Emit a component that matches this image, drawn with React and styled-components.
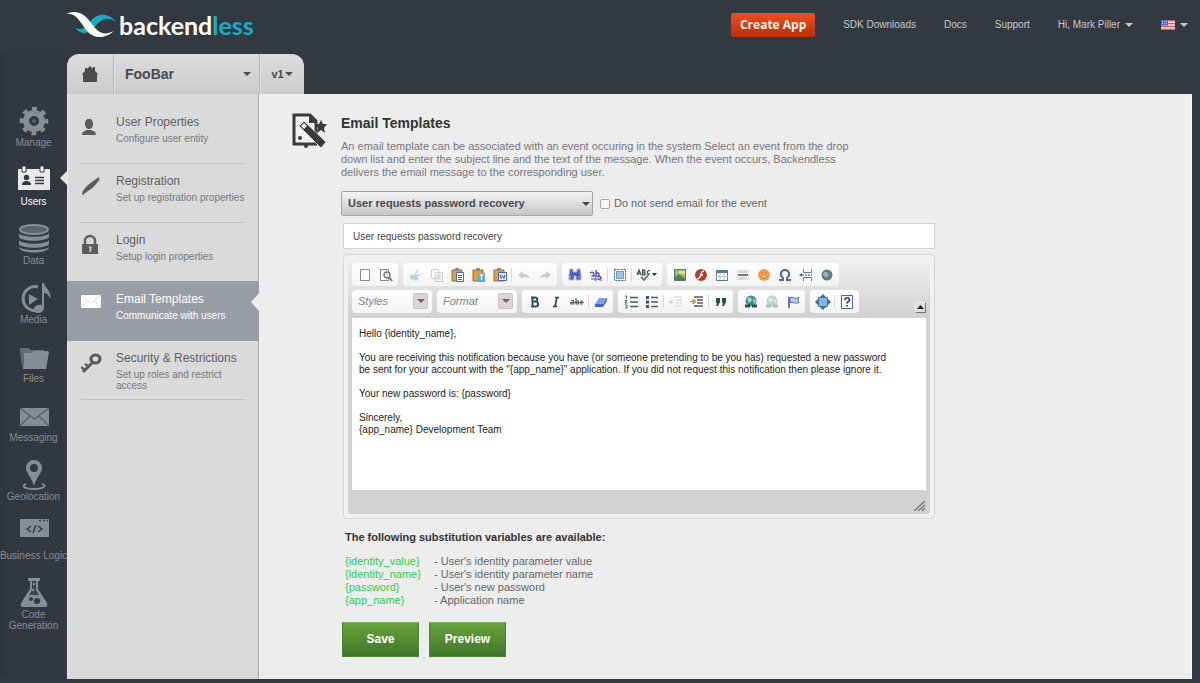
import React from "react";
import styled, { createGlobalStyle, css } from "styled-components";

const GlobalStyle = createGlobalStyle`
  *, *::before, *::after { box-sizing: border-box; }
  body {
    margin: 0;
    background: #333941;
    font-family: "Liberation Sans", Arial, sans-serif;
    color: #666;
  }
  button, input, select, textarea { font-family: inherit; margin: 0; }
  button { cursor: pointer; }
  svg { display: block; flex: none; }
  a { color: inherit; text-decoration: none; }
`;

/* ---------- page frame ---------- */

const Page = styled.div`
  min-height: 100vh;
  display: flex;
  flex-direction: column;
`;

const Header = styled.header`
  height: 54px;
  padding: 0 12px 4px 66px;
  display: flex;
  align-items: center;
  justify-content: space-between;
`;

const Logo = styled.a`
  display: flex;
  align-items: center;
  gap: 2px;
  color: #fff;
  font: 700 25px/28px Lato, "Open Sans", sans-serif;
`;

const LogoAccent = styled.span`
  color: #18adc4;
`;

const TopNav = styled.nav`
  display: flex;
  align-items: center;
  gap: 28px;
  font-size: 10px;
  line-height: 12px;
  color: #c6c9cd;
`;

const NavButton = styled.button`
  display: flex;
  align-items: center;
  gap: 5px;
  padding: 0;
  border: 0;
  background: none;
  font-size: 10px;
  line-height: 12px;
  color: inherit;
`;

const CreateButton = styled.button`
  width: 84px;
  height: 24px;
  padding: 0;
  border: 0;
  border-radius: 2px;
  background: linear-gradient(#ee4f21, #b92f07);
  color: #fff4ee;
  font: 700 12px/22px "Open Sans", sans-serif;
`;

const Caret = styled.span`
  width: 0;
  height: 0;
  border: 4px solid transparent;
  border-top-color: currentColor;
  border-bottom-width: 0;
`;

const Body = styled.div`
  flex: 1;
  display: flex;
  padding: 0 8px 4px 0;
`;

/* ---------- left rail ---------- */

const Rail = styled.nav`
  flex: none;
  width: 67px;
  padding-top: 51px;
  background: linear-gradient(90deg, #2c333c, #31383f 12px);
`;

const RailItem = styled.a`
  position: relative;
  display: flex;
  flex-direction: column;
  align-items: center;
  height: 59px;
  font-size: 10px;
  line-height: 11px;
  text-align: center;
  color: ${(p) => (p.$active ? "#fff" : "#868d97")};
  ${(p) =>
    p.$active &&
    css`
      &::after {
        content: "";
        position: absolute;
        right: 0;
        top: 7px;
        border: 7px solid transparent;
        border-right-color: #e4e4e4;
        border-left-width: 0;
      }
    `}
`;

const RailLabel = styled.span`
  white-space: pre;
`;

/* ---------- application tabs ---------- */

const Main = styled.div`
  flex: 1;
  min-width: 0;
  display: flex;
  flex-direction: column;
`;

const AppTabs = styled.div`
  display: flex;
  align-self: flex-start;
  height: 40px;
  border-radius: 12px 12px 0 0;
  overflow: hidden;
  background: linear-gradient(#dcdcde, #cacbcd);
`;

const AppTab = styled.button`
  width: ${(p) => p.$width}px;
  display: flex;
  align-items: center;
  justify-content: ${(p) => (p.$spread ? "space-between" : "center")};
  gap: 1px;
  padding: ${(p) => (p.$spread ? "0 8px 0 11px" : "0")};
  border: 0;
  background: none;
  color: #4b4b4d;
  font-size: ${(p) => (p.$spread ? 14 : 11)}px;
  font-weight: 700;
  & + & {
    border-left: 1px solid #b4b5b7;
    box-shadow: inset 1px 0 #e3e3e5;
  }
`;

const Panel = styled.div`
  flex: 1;
  display: flex;
  background: #ededed;
`;

/* ---------- section menu ---------- */

const SectionMenu = styled.nav`
  flex: none;
  width: 192px;
  padding-top: 11px;
  background: #dadada;
  border-left: 1px solid #e8e8e8;
  box-shadow: inset -1px 0 #b0b0b2, inset -2px 0 #d0d0d0;
`;

const MenuItem = styled.a`
  position: relative;
  display: grid;
  grid-template-columns: 35px 1fr;
  height: 59px;
  margin: 0 14px 0 13px;
  padding-top: 10px;
  border-bottom: 1px solid #c3c3c3;
  color: #5e5e60;
  ${(p) =>
    p.$last &&
    css`
      border-bottom-color: transparent;
    `}
  ${(p) =>
    p.$active &&
    css`
      height: 60px;
      margin: -1px 0 0 -1px;
      padding: 11px 14px 0;
      border: 0;
      background: #999ea6;
      color: #fff;
      &::after {
        content: "";
        position: absolute;
        right: 0;
        top: 12px;
        border: 9px solid transparent;
        border-right: 8px solid #ededed;
        border-left-width: 0;
      }
    `}
`;

const MenuTitle = styled.span`
  display: block;
  margin-bottom: 3px;
  font-size: 12px;
  line-height: 15px;
`;

const MenuNote = styled.span`
  display: block;
  font-size: 10px;
  line-height: 11px;
  color: ${(p) => (p.$active ? "#fff" : "#77777a")};
`;

/* ---------- content ---------- */

const Content = styled.main`
  flex: 1;
  min-width: 0;
  display: grid;
  grid-template-columns: 36px minmax(0, 594px);
  column-gap: 13px;
  align-content: start;
  padding: 19px 24px 20px 33px;
  border-right: 1px solid #f8f8f8;
`;

const Heading = styled.h1`
  margin: 1px 0 8px;
  font-size: 14px;
  line-height: 18px;
  color: #333;
`;

const Intro = styled.p`
  max-width: 530px;
  margin: 0 0 12px;
  font-size: 11px;
  line-height: 13px;
  color: #77777a;
`;

const EventRow = styled.div`
  display: flex;
  align-items: center;
  gap: 7px;
  margin-bottom: 7px;
`;

const SelectBox = styled.span`
  position: relative;
  display: block;
  width: ${(p) => p.$width}px;
`;

const EventSelect = styled.select`
  appearance: none;
  display: block;
  width: 100%;
  height: 25px;
  padding: 0 20px 2px 6px;
  border: 1px solid #a5a5a5;
  border-radius: 2px;
  background: linear-gradient(#f4f4f4, #c6c6c6);
  color: #4a4a4c;
  font-size: 11px;
  font-weight: 700;
`;

const SelectCaret = styled(Caret)`
  position: absolute;
  right: 3px;
  top: 11px;
  color: #444;
  pointer-events: none;
`;

const CheckLabel = styled.label`
  display: flex;
  align-items: center;
  gap: 4px;
  font-size: 11px;
  line-height: 13px;
`;

const Check = styled.input`
  appearance: none;
  width: 10px;
  height: 10px;
  border: 1px solid #a9a9a9;
  border-radius: 2px;
  background: #f6f6f6;
  &:checked {
    background: #666;
  }
`;

const Fields = styled.div`
  display: flex;
  flex-direction: column;
  gap: 5px;
  padding-left: 2px;
`;

const Subject = styled.input`
  width: 100%;
  height: 26px;
  padding: 0 9px;
  border: 1px solid #d3d3d3;
  background: #fff;
  color: #444;
  font-size: 10px;
`;

/* ---------- editor ---------- */

const Editor = styled.div`
  padding: 4px;
  border: 1px solid #d6d6d6;
  border-radius: 4px;
  background: #f1f1f1;
`;

const EditorSkin = styled.div`
  padding: 4px 4px 0;
  border-radius: 3px;
  background: linear-gradient(#f0f0f0, #d2d2d2 56px);
`;

const ToolRow = styled.div`
  display: flex;
  gap: 5px;
  height: 23px;
  margin-bottom: 4px;
`;

const ToolGroup = styled.div`
  display: flex;
  align-items: center;
  padding: 0 2px;
  border-radius: 4px;
  background: linear-gradient(#fff, #f3f3f3);
`;

const Tool = styled.button`
  display: flex;
  align-items: center;
  justify-content: center;
  width: ${(p) => (p.$wide ? 27 : 21)}px;
  height: 23px;
  padding: 0;
  border: 0;
  background: none;
  opacity: ${(p) => (p.$dim ? 0.35 : 1)};
`;

const Divider = styled.span`
  width: 1px;
  height: 13px;
  margin: 0 1px;
  background: #d8d8d8;
`;

const StyleSelect = styled.select`
  appearance: none;
  display: block;
  width: 100%;
  height: 23px;
  padding: 0 22px 2px 6px;
  border: 0;
  border-radius: 4px;
  background: linear-gradient(#fff, #f3f3f3);
  color: #848484;
  font-size: 11px;
  font-style: italic;
`;

const StyleArrow = styled.span`
  position: absolute;
  right: 4px;
  top: 3px;
  width: 15px;
  height: 16px;
  display: flex;
  align-items: center;
  justify-content: center;
  border: 1px solid #c9c4c4;
  border-radius: 2px;
  background: #dbd5d5;
  color: #6c6464;
  pointer-events: none;
`;

const Collapse = styled.button`
  align-self: flex-end;
  display: flex;
  align-items: center;
  justify-content: center;
  width: 11px;
  height: 11px;
  margin-left: auto;
  padding: 0;
  border: 1px solid;
  border-color: #eee #777 #777 #eee;
  background: #ddd;
`;

const Message = styled.textarea`
  display: block;
  width: 100%;
  height: 172px;
  margin-top: 5px;
  padding: 10px 7px;
  border: 0;
  resize: none;
  background: #fff;
  color: #222;
  font-size: 10px;
  line-height: 12px;
`;

const EditorFoot = styled.div`
  display: flex;
  align-items: center;
  justify-content: flex-end;
  height: 24px;
  padding-top: 8px;
`;

/* ---------- variables and actions ---------- */

const VarsTitle = styled.h2`
  margin: 11px 0 10px 4px;
  font-size: 11px;
  line-height: 15px;
  color: #333;
`;

const VarsTable = styled.table`
  margin-left: 4px;
  border-collapse: collapse;
  font-size: 11px;
  line-height: 13px;
  th, td { padding: 0; text-align: left; }
  th { width: 89px; font-weight: 400; color: #2ecc52; }
`;

const Actions = styled.div`
  display: flex;
  gap: 10px;
  margin: 15px 0 0 1px;
`;

const ActionButton = styled.button`
  width: 77px;
  height: 35px;
  padding: 0 0 2px;
  border: 1px solid #4c8430;
  border-top-color: #82b45f;
  background: linear-gradient(#68a33c, #41752a);
  color: #fff;
  font-size: 12px;
  font-weight: 700;
`;

/* ---------- drawings ---------- */

const LogoMark = () => (
  <svg width="51" height="28" viewBox="0 0 51 28" aria-hidden="true">
    <path d="M9 17C16 20 20 16 24 11C31 2 42 1 50 11C43 6 37 7 31 13C26 20 18 27 9 17Z" fill="#18adc4" />
    <path d="M0 3C8-1 16 1 22 8L29 17C34 23 40 24 48 20C39 28 28 28 21 20L13 9C9 4 5 2 0 3Z" fill="#fff" />
  </svg>
);

const Flag = () => (
  <svg width="14" height="10" viewBox="0 0 14 10" role="img" aria-label="English (US)">
    <path d="M0 0h14v10H0z" fill="#f4e6e6" />
    <path d="M0 .7h14M0 3.6h14M0 6.5h14M0 9.3h14" stroke="#dd5a5a" strokeWidth="1.3" />
    <path d="M0 0h7v5.5H0z" fill="#4a6fd0" />
    <path d="M1 1.5h5M1 3.5h5" stroke="#c5d3f5" strokeWidth=".8" strokeDasharray="1 1" />
  </svg>
);

const railArt = {
  Manage: (
    <>
      <circle cx="17" cy="16" r="8" fill="none" stroke="currentColor" strokeWidth="6" />
      <circle cx="17" cy="16" r="12.3" fill="none" stroke="currentColor" strokeWidth="4" strokeDasharray="4.8 4.86" strokeDashoffset="2.4" />
      <circle cx="17" cy="16" r="2" fill="currentColor" opacity=".5" />
    </>
  ),
  Users: (
    <>
      <path d="M2 5h30a1 1 0 0 1 1 1v20H1V6a1 1 0 0 1 1-1Z" fill="#e9e9ea" />
      <path d="M5 2h4v6H5zM23 2h4v6h-4z" fill="#f5f5f5" stroke="#333941" />
      <circle cx="9.5" cy="13.5" r="2.7" fill="#333941" />
      <path d="M5 21c0-3 2-4 4.500-4s4.500 1 4.500 4z" fill="#333941" />
      <path d="M18 13.500h9M18 16.500h9M18 19.500h9" stroke="#333941" strokeWidth="1.400" />
    </>
  ),
  Data: (
    <>
      <ellipse cx="17" cy="6.500" rx="14" ry="4.500" fill="#5d646e" stroke="currentColor" strokeWidth="2" />
      <path d="M2 10c3 5 27 5 30 0v4c-3 5-27 5-30 0zM2 17c3 5 27 5 30 0v4c-3 5-27 5-30 0zM2 24c3 4 27 4 30 0v1c-3 6-27 6-30 0z" fill="currentColor" />
    </>
  ),
  Media: (
    <>
      <path d="M21 5A12 12 0 1 0 22 28" fill="none" stroke="currentColor" strokeWidth="3" />
      <path d="M12 12l9 5-9 6z" fill="currentColor" />
      <path d="M25 1h2c1 5 8 8 6 16-1-4-3-6-6-6v14c0 4-3 6-6 6s-5-2-4-5c1-3 5-4 8-3z" fill="currentColor" />
    </>
  ),
  Files: (
    <>
      <path d="M3 7h9l2 2h13v4H7L5 27 3 9z" fill="#656c76" />
      <path d="M7 12h8l2-2h14l1 1-3 17H6z" fill="currentColor" />
    </>
  ),
  Messaging: (
    <>
      <path d="M3 8h29v18H3z" fill="currentColor" />
      <path d="M3 8l14.500 11L32 8M3 26l10-10M32 26L22 16" fill="none" stroke="#555c66" strokeWidth="1.300" />
    </>
  ),
  Geolocation: (
    <>
      <path d="M9 25c-4 1-4 5 8 5s12-4 8-5" fill="none" stroke="currentColor" strokeWidth="2" />
      <path fillRule="evenodd" d="M17 1a8 8 0 0 1 8 8c0 5-5 8-8 18C14 17 9 14 9 9a8 8 0 0 1 8-8zm0 4a4 4 0 1 0 0 8 4 4 0 0 0 0-8z" fill="currentColor" />
    </>
  ),
  "Business Logic": (
    <>
      <path d="M3 1h29v18H3z" fill="currentColor" />
      <path d="M22 2.500h2M26 2.500h2M29.500 2.500h1.500" stroke="#333941" strokeWidth="1.500" />
      <path d="M14 8l-4 3 4 3M21 8l4 3-4 3M19 7l-3 8" fill="none" stroke="#333941" strokeWidth="1.400" />
    </>
  ),
  "Code\nGeneration": (
    <>
      <path d="M11 1h12v3h-2v8l9 14c1 2 0 4-2 4H6c-2 0-3-2-2-4l9-14V4h-2z" fill="currentColor" />
      <path d="M15 4h4v9l3 5H12l3-5z" fill="#3d444e" />
      <path d="M16 6h2v2h-2zM15 12h2v2h-2z" fill="currentColor" />
      <circle cx="14" cy="22" r="2" fill="#333941" />
      <circle cx="20" cy="24" r="3" fill="#333941" />
    </>
  ),
};

const menuArt = {
  user: <path d="M8 4c3 0 4 2 4 5s-1.500 5-4 5-4-2-4-5 1-5 4-5zM1 20c0-4 3-4 5-5h4c2 1 5 1 5 5z" fill="#5c5c5e" />,
  pen: <path d="M1 21c0-4 3-7 6-10L15 5l3-2c1 2 0 4-2 6-3 3-5 6-9 8-2 1-3 3-6 4z" fill="#5c5c5e" />,
  lock: (
    <>
      <path d="M4 12V8a5 5 0 0 1 10 0v4" fill="none" stroke="#5c5c5e" strokeWidth="2.400" />
      <path d="M1 11h16v10H1z" fill="#5c5c5e" />
      <path d="M7.500 13.500h3V16L10 19H8.500V16z" fill="#c9c9c9" />
    </>
  ),
  mail: (
    <>
      <path d="M0 3h20v13H0z" fill="#fff" />
      <path d="M0 3l10 8 10-8M0 16l7-7M20 16l-7-7" fill="none" stroke="#dcdee1" />
    </>
  ),
  key: (
    <>
      <ellipse cx="14.500" cy="8" rx="4.500" ry="4" fill="none" stroke="#5c5c5e" strokeWidth="3.200" />
      <path d="M11 12L2 21" fill="none" stroke="#5c5c5e" strokeWidth="3" />
      <path d="M8 16l-4-3M4 19l-4-3" fill="none" stroke="#5c5c5e" strokeWidth="2.400" />
    </>
  ),
};

const TemplateIcon = () => (
  <svg width="36" height="36" viewBox="0 0 36 36" aria-hidden="true">
    <path d="M2 2h16l6 6v23H2z" fill="#f0f0f0" stroke="#3a3a3a" strokeWidth="3" />
    <path d="M17 1h1l7 7v2h-8z" fill="#3a3a3a" />
    <path d="M29 7l2 4 4 0-3 4 1 5-4-3-4 3 1-5-3-4h4z" fill="#3a3a3a" />
    <path d="M7 13l5-5 22 21-5 6z" fill="#3a3a3a" stroke="#f0f0f0" strokeWidth=".8" />
    <path d="M9 13l3-3 3 3-3 3z" fill="#fff" />
    <circle cx="8" cy="25" r="2" fill="#3a3a3a" />
    <circle cx="14" cy="33" r="2" fill="#3a3a3a" />
  </svg>
);

const clipboard = (
  <>
    <path d="M2 3h10v11H2z" fill="#dfa044" stroke="#a06d24" />
    <path d="M5 1h4v3H5z" fill="#8a8a8a" />
  </>
);
const globe = (
  <>
    <circle cx="8" cy="7" r="5.500" fill="#3f8f86" />
    <path d="M4 5l3-2 2 3-3 3zM10 4l3 3-2 3z" fill="#a8dcc8" />
    <path d="M2 12h5M9 12h5" stroke="#2c4e58" strokeWidth="3" />
  </>
);

const toolArt = {
  page: <path d="M3.500 2.500h9v11h-9z" fill="#fff" stroke="#888" />,
  preview: (
    <>
      <path d="M2.500 2.500h8v11h-8z" fill="#fff" stroke="#888" />
      <circle cx="9" cy="8" r="3" fill="#dfe8ea" stroke="#777" strokeWidth="1.400" />
      <path d="M11 10l3 4" stroke="#777" strokeWidth="2" />
    </>
  ),
  cut: <path d="M10 2L7 8M3 9h6l4-2M5 8a2 2 0 1 0 1 3zM8 9a2 2 0 1 0 2 3z" fill="#5a7fd0" stroke="#5a7fd0" strokeWidth="1.300" />,
  copy: <path d="M2.500 2.500h7v9h-7zM6.500 5.500h7v9h-7zM8 8h4M8 10h4M8 12h4" fill="#fff" stroke="#888" />,
  paste: (
    <>
      {clipboard}
      <path d="M6.500 5.500h7v9h-7z" fill="#fff" stroke="#4866ac" />
      <path d="M8 8.500h4M8 10.500h4M8 12.500h4" stroke="#4866ac" />
    </>
  ),
  pasteText: (
    <>
      {clipboard}
      <path d="M7 6h7v9H7z" fill="#62a9c8" />
      <path d="M8.500 8h4M10.500 8v5" stroke="#fff" strokeWidth="1.300" />
    </>
  ),
  pasteWord: (
    <>
      {clipboard}
      <path d="M6.500 5.500h8v8h-8z" fill="#e8eefb" stroke="#4866ac" />
      <path d="M8 7.500l1 4 1.500-3 1.500 3 1-4" fill="none" stroke="#4866ac" />
    </>
  ),
  undo: <path d="M2 8l5-4v3c4 0 6 2 7 5-2-2-4-2-7-2v2z" fill="#6d8080" />,
  redo: <path d="M14 8L9 4v3c-4 0-6 2-7 5 2-2 4-2 7-2v2z" fill="#6d8080" />,
  find: <path d="M3 2h3v3h4V2h3l1 6v5H9V9H7v4H2V8zM3.500 9v2M12 9v2" fill="#4a62b4" stroke="#a7b5e4" />,
  replace: (
    <>
      <path d="M2 6c3-2 4 0 4 3H3.500M8 3v6c4 1 4-4 0-3M10 10c4-2 4 4 0 2" fill="none" stroke="#4e56b8" strokeWidth="1.500" />
      <path d="M3 12h6l-2-2m2 2l-2 2M12 12l2 2" fill="none" stroke="#7e84c4" strokeWidth="1.300" />
    </>
  ),
  selectAll: (
    <>
      <path d="M2.500 2.500h11v11h-11z" fill="#fff" stroke="#406274" strokeDasharray="2 1" />
      <path d="M4 4h8v8H4z" fill="#6d9cc8" />
      <path d="M5 6h6M5 8h6M5 10h6" stroke="#dceaf5" />
    </>
  ),
  spell: (
    <>
      <path d="M1 8l2-5 2 5M2 6.500h2M6.500 3v5c4 0 3-2 1-2.500C10 5 9 3 6.500 3zM14 4c-3-2-4 4 0 3" fill="none" stroke="#3f5757" strokeWidth="1.300" />
      <path d="M5 10l3 3 5-6" fill="none" stroke="#4d8174" strokeWidth="1.800" />
    </>
  ),
  image: (
    <>
      <path d="M2.500 2.500h11v11h-11z" fill="#9ebc80" stroke="#56756c" />
      <path d="M7 4h6v3H7z" fill="#f5d68b" />
      <path d="M3 10l4-3 6 5v1H3z" fill="#547f46" />
    </>
  ),
  flash: (
    <>
      <circle cx="8" cy="8" r="6" fill="#b63c32" />
      <path d="M11 4C8 4 8 8 7 10s-2 2-3 2M7 8h3" fill="none" stroke="#fff" strokeWidth="1.500" />
    </>
  ),
  table: (
    <>
      <path d="M2.500 3.500h11v10h-11z" fill="#fff" stroke="#5d7890" />
      <path d="M2 3h12v3H2z" fill="#5d7890" />
      <path d="M6 6v7M10 6v7M2 9.500h12" stroke="#b3c1ce" />
    </>
  ),
  rule: (
    <>
      <path d="M2.500 3.500h11v9h-11z" fill="#f3f3f3" stroke="#ddd" />
      <path d="M3 8h10" stroke="#777" strokeWidth="2" />
      <path d="M4 5h8M4 11h8" stroke="#bbb" />
    </>
  ),
  smiley: (
    <>
      <circle cx="8" cy="8" r="6" fill="#f0a050" />
      <path d="M5 6h2M9 6h2M5 9c1 3 5 3 6 0" stroke="#c26a20" fill="#fbd3a1" />
    </>
  ),
  omega: <path d="M2 13h4v-2C2 8 4 3 8 3s6 5 2 8v2h4" fill="none" stroke="#4960b4" strokeWidth="1.900" />,
  pageBreak: (
    <>
      <path d="M5.500 2v3.500h8V2M5.500 14v-3.500h8V14" fill="none" stroke="#6d8080" />
      <path d="M4 8h10" stroke="#444" strokeDasharray="2 1" />
      <path d="M1 8l3-2v4z" fill="#4960b4" />
    </>
  ),
  iframe: (
    <>
      <circle cx="8" cy="8" r="5.500" fill="#607c88" />
      <path d="M5 5l3 0 2 3-3 3-3-3z" fill="#98b1b5" />
    </>
  ),
  bold: <path d="M4 3.500h4c3 0 3 4 0 4H6h2.500c3.500 0 3.500 5 0 5H4m1.500-9v9" fill="none" stroke="#2d5553" strokeWidth="2" />,
  italic: <path d="M7 3.500h4M5 12.500h4M9 3.500l-2 9" fill="none" stroke="#2d4d4d" strokeWidth="1.700" />,
  strike: (
    <>
      <path d="M2 6.500h2.500V10H2V8.500h2.500M7 4v6h2.500V7H7M14 7h-2v3h2" fill="none" stroke="#4f6462" strokeWidth="1.200" />
      <path d="M1 8.500h14" stroke="#4f6462" />
    </>
  ),
  eraser: (
    <>
      <path d="M6 4h8l-4 6H2z" fill="#7da0ea" />
      <path d="M2 10h8v3H2zM10 10l4-6v3l-4 6z" fill="#4a63bd" />
    </>
  ),
  ordered: (
    <>
      <path d="M7 3.500h8M7 8h8M7 12.500h8" stroke="#4b6060" strokeWidth="1.500" />
      <path d="M2 2h1.500v3M2 6.500h2L2 9h2.500M2 11h2v3H2" fill="none" stroke="#4b6060" />
    </>
  ),
  bullets: (
    <>
      <path d="M7 3.500h7M7 8h7M7 12.500h7" stroke="#4b6060" strokeWidth="1.500" />
      <path d="M2 2h3v3H2zM2 6.500h3v3H2zM2 11h3v3H2z" fill="#3c4f80" />
    </>
  ),
  outdent: <path d="M6 3h8M8 6h6M8 9h6M6 12h8M1 8l3-2v4z" fill="#888" stroke="#888" />,
  indent: (
    <>
      <path d="M5 3h9M8 6h6M8 9h6M5 12h9" stroke="#4b6060" strokeWidth="1.400" />
      <path d="M1 7.500h3M4 5l3 2.500L4 10z" fill="#d28a3c" stroke="#d28a3c" />
    </>
  ),
  quote: <path d="M3 4h4v4l-2 4H3l1-3H3zM9 4h4v4l-2 4H9l1-3H9z" fill="#2f4c4c" />,
  link: globe,
  unlink: globe,
  anchor: (
    <>
      <path d="M4 3v11" stroke="#3f51a5" strokeWidth="1.600" />
      <path d="M5 3.500c3-1 4 2 9 0-1 2-1 3 0 5-4 2-6-1-9 0z" fill="#bfcaf1" stroke="#596bc0" />
    </>
  ),
  maximize: (
    <>
      <path d="M8 0l3 3H5zM8 16l3-3H5zM0 8l3-3v6zM16 8l-3-3v6z" fill="#48648f" />
      <path d="M3.500 3.500h9v9h-9z" fill="#7fb7e4" stroke="#46709c" />
    </>
  ),
  about: (
    <>
      <path d="M2.500 1.500h11v13h-11z" fill="#f6f8ff" stroke="#4c5fa3" />
      <path d="M6 6c0-3 4.500-3 4.500 0C10.500 7.500 8 7.500 8 9.500M8 11v1.500" fill="none" stroke="#2c3c96" strokeWidth="1.700" />
    </>
  ),
};

/* ---------- data ---------- */

const railItems = ["Manage", "Users", "Data", "Media", "Files", "Messaging", "Geolocation", "Business Logic", "Code\nGeneration"];

const menuItems = [
  { icon: "user", title: "User Properties", note: "Configure user entity" },
  { icon: "pen", title: "Registration", note: "Set up registration properties" },
  { icon: "lock", title: "Login", note: "Setup login properties", last: true },
  { icon: "mail", title: "Email Templates", note: "Communicate with users", active: true },
  { icon: "key", title: "Security & Restrictions", note: "Set up roles and restrict access" },
];

const firstRow = [
  ["page", "preview"],
  ["cut", "copy", "paste", "pasteText", "pasteWord", "|", "undo", "redo"],
  ["find", "replace", "|", "selectAll", "|", "spell"],
  ["image", "flash", "table", "rule", "smiley", "omega", "pageBreak", "iframe"],
];

const secondRow = [
  ["bold", "italic", "strike", "|", "eraser"],
  ["ordered", "bullets", "|", "outdent", "indent", "|", "quote"],
  ["link", "unlink", "anchor"],
  ["maximize", "|", "about"],
];

const dimmed = ["cut", "copy", "undo", "redo", "outdent", "unlink"];

const variables = [
  ["{identity_value}", "- User's identity parameter value"],
  ["{identity_name}", "- User's identity parameter name"],
  ["{password}", "- User's new password"],
  ["{app_name}", "- Application name"],
];

const messageText = `Hello {identity_name},

You are receiving this notification because you have (or someone pretending to be you has) requested a new password
be sent for your account with the "{app_name}" application. If you did not request this notification then please ignore it.

Your new password is: {password}

Sincerely,
{app_name} Development Team`;

const ToolGroups = ({ groups }) =>
  groups.map((names, g) => (
    <ToolGroup key={g}>
      {names.map((name, i) =>
        name === "|" ? (
          <Divider key={i} />
        ) : (
          <Tool key={i} type="button" aria-label={name} $dim={dimmed.includes(name)} $wide={name === "spell"}>
            <svg width={name === "spell" ? 22 : 16} height="16" viewBox={name === "spell" ? "0 0 22 16" : "0 0 16 16"}>
              {toolArt[name]}
              {name === "spell" && <path d="M16 6h5l-2.500 3z" fill="#333" />}
            </svg>
          </Tool>
        )
      )}
    </ToolGroup>
  ));

const StyleCombo = ({ label }) => (
  <SelectBox $width={80}>
    <StyleSelect aria-label={label}>
      <option>{label}</option>
    </StyleSelect>
    <StyleArrow>
      <Caret />
    </StyleArrow>
  </SelectBox>
);

export default function App() {
  return (
    <Page>
      <GlobalStyle />
      <Header>
        <Logo href="#">
          <LogoMark />
          <span>
            backend<LogoAccent>less</LogoAccent>
          </span>
        </Logo>
        <TopNav>
          <CreateButton type="button">Create App</CreateButton>
          <a href="#sdk">SDK Downloads</a>
          <a href="#docs">Docs</a>
          <a href="#support">Support</a>
          <NavButton type="button">
            Hi, Mark Piller <Caret />
          </NavButton>
          <NavButton type="button">
            <Flag /> <Caret />
          </NavButton>
        </TopNav>
      </Header>

      <Body>
        <Rail>
          {railItems.map((name) => (
            <RailItem key={name} href="#" $active={name === "Users"}>
              <svg width="34" height="32" viewBox="0 0 34 32" aria-hidden="true">
                {railArt[name]}
              </svg>
              <RailLabel>{name}</RailLabel>
            </RailItem>
          ))}
        </Rail>

        <Main>
          <AppTabs>
            <AppTab type="button" $width={46} aria-label="Home">
              <svg width="16" height="16" viewBox="0 0 16 16">
                <path d="M8 0l3 3V1h2v4l3 3-1 1v7H1V9L0 8l3-3V2h2v1z" fill="#4b4b4d" />
              </svg>
            </AppTab>
            <AppTab type="button" $width={146} $spread>
              FooBar <Caret />
            </AppTab>
            <AppTab type="button" $width={45}>
              v1 <Caret />
            </AppTab>
          </AppTabs>

          <Panel>
            <SectionMenu>
              {menuItems.map((item) => (
                <MenuItem key={item.title} href="#" $active={item.active} $last={item.last}>
                  <svg width="21" height="22" viewBox="0 0 21 22" aria-hidden="true">
                    {menuArt[item.icon]}
                  </svg>
                  <span>
                    <MenuTitle>{item.title}</MenuTitle>
                    <MenuNote $active={item.active}>{item.note}</MenuNote>
                  </span>
                </MenuItem>
              ))}
            </SectionMenu>

            <Content>
              <TemplateIcon />
              <div>
                <Heading>Email Templates</Heading>
                <Intro>
                  An email template can be associated with an event occuring in the system Select an event from the drop
                  down list and enter the subject line and the text of the message. When the event occurs, Backendless
                  delivers the email message to the corresponding user.
                </Intro>

                <EventRow>
                  <SelectBox $width={252}>
                    <EventSelect aria-label="Event">
                      <option>User requests password recovery</option>
                    </EventSelect>
                    <SelectCaret />
                  </SelectBox>
                  <CheckLabel>
                    <Check type="checkbox" />
                    Do not send email for the event
                  </CheckLabel>
                </EventRow>

                <Fields>
                  <Subject aria-label="Subject" defaultValue="User requests password recovery" />
                  <Editor>
                    <EditorSkin>
                      <ToolRow>
                        <ToolGroups groups={firstRow} />
                      </ToolRow>
                      <ToolRow>
                        <StyleCombo label="Styles" />
                        <StyleCombo label="Format" />
                        <ToolGroups groups={secondRow} />
                        <Collapse type="button" aria-label="Collapse toolbar">
                          <svg width="7" height="5" viewBox="0 0 7 5">
                            <path d="M0 4l3.500-4L7 4z" fill="#222" />
                          </svg>
                        </Collapse>
                      </ToolRow>
                      <Message aria-label="Message" defaultValue={messageText} />
                      <EditorFoot>
                        <svg width="12" height="12" viewBox="0 0 12 12" aria-hidden="true">
                          <path d="M0 11L11 1M4 11l7-6M8 11l3-3" stroke="#777" strokeWidth="1.400" />
                        </svg>
                      </EditorFoot>
                    </EditorSkin>
                  </Editor>
                </Fields>

                <VarsTitle>The following substitution variables are available:</VarsTitle>
                <VarsTable>
                  <tbody>
                    {variables.map(([name, note]) => (
                      <tr key={name}>
                        <th scope="row">{name}</th>
                        <td>{note}</td>
                      </tr>
                    ))}
                  </tbody>
                </VarsTable>
                <Actions>
                  <ActionButton type="button">Save</ActionButton>
                  <ActionButton type="button">Preview</ActionButton>
                </Actions>
              </div>
            </Content>
          </Panel>
        </Main>
      </Body>
    </Page>
  );
}
